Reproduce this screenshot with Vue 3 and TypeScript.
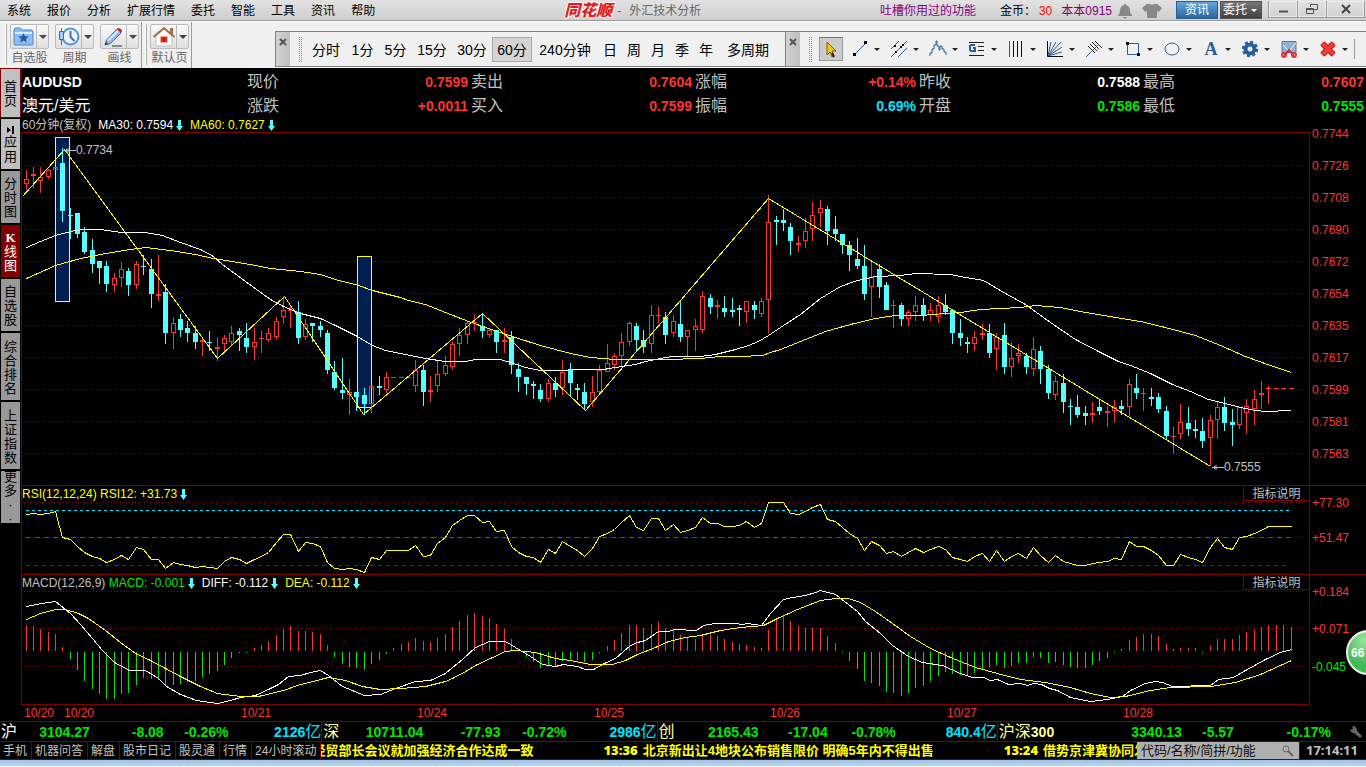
<script setup lang="ts">
interface Candle { x: number; up: boolean; hi: number; top: number; bot: number; lo: number }

const menus = ['系统', '报价', '分析', '扩展行情', '委托', '智能', '工具', '资讯', '帮助']
const periods = [
  { t: '分时', w: 'p2' }, { t: '1分', w: 'p1' }, { t: '5分', w: 'p1' }, { t: '15分', w: 'p2' }, { t: '30分', w: 'p2' },
  { t: '60分', w: 'p2', on: true }, { t: '240分钟', w: 'p4' }, { t: '日', w: 'p0' }, { t: '周', w: 'p0' }, { t: '月', w: 'p0' },
  { t: '季', w: 'p0' }, { t: '年', w: 'p0' }, { t: '多周期', w: 'p3' },
]
const drawTools = ['趋势线', '平行线', '波浪', '黄金分割', '周期线', '甘氏线', '通道', '矩形', '圆', '文字', '设置', '截图', '删除']
const quotes = [
  { a: '现价', av: '0.7599', ac: 'red', b: '涨跌', bv: '+0.0011', bc: 'red' },
  { a: '卖出', av: '0.7604', ac: 'red', b: '买入', bv: '0.7599', bc: 'red' },
  { a: '涨幅', av: '+0.14%', ac: 'red', b: '振幅', bv: '0.69%', bc: 'cyan' },
  { a: '昨收', av: '0.7588', ac: 'white', b: '开盘', bv: '0.7586', bc: 'green' },
  { a: '最高', av: '0.7607', ac: 'red', b: '最低', bv: '0.7555', bc: 'green' },
]
const sideTabs = [
  { t: '首页', k: 'home' }, { t: '应用', k: 'apps' }, { t: '分时图', k: 'three' }, { t: 'K线图', k: 'three on' },
  { t: '自选股', k: 'three' }, { t: '综合排名', k: 'four' }, { t: '上证指数', k: 'four' }, { t: '更多··', k: 'three' },
]
const indices = [
  { n: '沪', nc: 'white', v: ['3104.27', '-8.08', '-0.26%'], amt: '2126', w: 322, cols: [90, 74, 65, 93] },
  { n: '深', nc: 'pale', v: ['10711.04', '-77.93', '-0.72%'], amt: '2986', w: 335, cols: [101, 77, 66, 90] },
  { n: '创', nc: 'pale', v: ['2165.43', '-17.04', '-0.78%'], amt: '840.4', w: 340, cols: [101, 69, 68, 101] },
  { n: '沪深300', nc: 'pale', v: ['3340.13', '-5.57', '-0.17%'], amt: '', w: 369, cols: [184, 52, 97, 35] },
]
const footTabs = ['手机', '机器问答', '解盘', '股市日记', '股灵通', '行情', '24小时滚动']
const news = [
  { time: '', text: '经贸部长会议就加强经济合作达成一致' },
  { time: '13:36', text: '北京新出让4地块公布销售限价 明确5年内不得出售' },
  { time: '13:24', text: '借势京津冀协同发展' },
]

const barX = (i: number) => 26 + Math.floor(i * 7.355)

// high, body top, body bottom, low; r = rising, c = falling
const raw = `r170,179,184,190 r167,174,176,188 r167,177,181,193 r169,170,177,179 r167,167,170,170 c148,163,211,222 c208,215,216,239 c213,213,234,238 c227,232,252,254 c239,250,264,273
c261,261,268,284 c261,266,284,292 r273,278,285,292 r262,269,278,287 c268,271,285,296 r261,264,285,289 c255,266,267,275 c259,269,294,308 r255,294,296,301 c284,292,333,344
r317,323,333,349 c314,319,330,337 c321,328,333,342 c326,333,342,349 r338,340,342,356 c331,342,343,351 r337,347,349,361 r335,338,344,351 r326,333,342,345 c328,331,335,351
c323,338,347,353 r328,342,347,360 r331,338,339,353 r328,333,340,342 r317,321,337,340 r298,310,317,324 r305,310,311,328 c301,312,338,344 r319,324,337,340 c323,323,326,342
c321,326,330,337 c330,333,370,374 c361,372,388,390 c358,390,393,399 r379,392,395,415 c392,392,397,411 c388,395,404,415 r386,386,404,413 c376,386,388,395 r372,377,390,393
r377,377,378,378 r377,377,378,378 r377,377,378,378 r360,370,386,392 c365,370,392,406 r376,390,392,402 r361,374,386,392 r356,365,374,376 r342,344,367,370 r328,335,344,356
r322,323,335,344 r315,322,323,331 c314,326,331,338 r329,330,335,338 c330,330,342,353 r328,340,342,353 c331,337,365,374 c363,369,377,392 c377,377,384,395 c381,384,386,399
c384,390,399,402 r379,383,399,402 c377,383,390,397 r360,372,388,395 c363,370,383,396 c384,388,390,400 c383,392,404,410 r376,392,402,407 r365,370,392,394 r344,363,372,372
r353,356,365,370 r333,342,356,367 r321,323,342,346 c323,326,340,351 c330,340,347,353 r305,315,344,353 r307,315,316,323 c312,317,335,344 r315,321,333,337 c301,324,337,342
r330,330,337,357 r319,326,330,351 r291,296,330,333 c294,298,307,314 r300,305,307,319 c296,308,312,317 c298,310,312,317 c305,308,310,326 r301,301,312,323 c301,305,310,319
r298,301,314,317 r195,222,300,333 c216,220,222,245 c209,220,223,231 c223,227,241,255 r236,243,245,252 r218,231,241,248 r202,215,229,241 r200,208,213,227 c206,209,231,245
c216,229,234,241 c234,234,245,254 c241,245,255,271 c238,259,266,269 c245,266,294,300 r262,277,287,317 c264,269,287,298 c282,285,310,310 r300,305,306,328 c303,305,319,326
r310,312,319,326 r296,305,312,321 c298,305,315,321 r303,310,315,321 r296,305,317,323 c294,305,312,315 c310,310,333,344 c319,333,338,346 c337,342,344,353 r331,337,344,351
r324,333,335,340 c324,333,353,358 r333,337,349,370 c323,335,367,374 r342,358,367,377 r344,353,356,363 c353,356,367,374 r337,349,369,376 c346,351,369,384 c365,369,393,399
r376,381,395,400 c374,383,402,413 c399,406,407,425 c395,407,415,418 c406,413,416,425 r402,413,415,423 c399,407,411,415 r406,411,413,427 r400,407,411,422 c400,406,409,415
r379,384,407,416 c374,388,393,399 r388,393,394,411 c388,397,399,406 c393,397,409,413 c406,411,436,440 r427,436,437,454 r404,422,434,439 c407,423,429,436 c420,429,431,438
c418,431,441,448 r415,420,438,466 r402,407,420,439 c397,407,423,431 c409,422,425,446 r407,407,425,429 r399,406,413,434 r390,399,409,425 r381,393,395,409 r386,388,389,404
r388,388,389,389 r388,388,389,389 r388,388,389,389`
const candles: Candle[] = raw.split(/\s+/).map((s, i) => {
  const [hi, top, bot, lo] = s.slice(1).split(',').map(Number)
  return { x: barX(i), up: s[0] === 'r', hi, top, bot, lo }
})
const isHollow = (c: Candle) => c.up && c.bot - c.top > 2
const wick = (c: Candle) => `M${c.x + 0.5} ${c.hi}V${c.top}M${c.x + 0.5} ${c.bot}V${c.lo}`

const rsi = [514, 513, 514, 513, 511, 537, 539, 546, 552, 556, 558, 562, 559, 555, 559, 547, 549, 559, 559, 568, 562, 564, 565, 567, 566, 567, 568, 561, 557, 559,
  563, 559, 556, 552, 542, 534, 534, 551, 542, 543, 546, 562, 568, 569, 568, 569, 572, 557, 559, 550, 550, 550, 550, 545, 556, 555, 543, 537, 525, 520,
  515, 515, 522, 521, 531, 530, 546, 552, 556, 557, 562, 549, 553, 541, 546, 550, 556, 548, 536, 533, 529, 522, 515, 527, 530, 518, 518, 530, 524, 532,
  530, 527, 517, 523, 523, 526, 526, 525, 521, 527, 523, 502, 502, 502, 513, 514, 511, 507, 504, 519, 521, 527, 533, 538, 550, 541, 545, 553, 551, 556,
  552, 548, 552, 549, 546, 549, 557, 559, 561, 556, 553, 561, 550, 561, 556, 553, 558, 547, 555, 562, 555, 561, 563, 565, 565, 563, 562, 561, 558, 559,
  541, 546, 546, 550, 555, 565, 565, 554, 557, 559, 562, 547, 538, 547, 549, 537, 536, 533, 530, 526, 526, 526, 526]
const rsiLine = rsi.map((y, i) => `${barX(i)},${y}`).join(' ')

const hist = [26, 25, 22, 19, 17, 4, -7, -18, -29, -37, -42, -47, -47, -42, -41, -33, -26, -27, -28, -33, -33, -32, -30, -29, -25, -22, -19, -13, -6, -1,
  -1, 3, 6, 10, 16, 22, 25, 20, 20, 19, 17, 6, -5, -12, -15, -16, -18, -12, -8, -2, 3, 7, 9, 13, 10, 9, 13, 17, 24, 30,
  36, 38, 35, 33, 27, 22, 12, 1, -5, -10, -16, -13, -14, -9, -7, -8, -10, -8, -1, 5, 11, 18, 26, 26, 23, 27, 29, 23, 21, 16,
  13, 12, 17, 16, 15, 12, 9, 7, 6, 4, 3, 21, 31, 36, 30, 25, 23, 23, 23, 15, 8, -1, -9, -17, -29, -31, -34, -40, -41, -44,
  -41, -36, -34, -29, -24, -20, -22, -23, -24, -21, -17, -15, -13, -16, -14, -11, -11, -5, -6, -11, -10, -13, -15, -16, -16, -13, -9, -6, -1, 2,
  11, 14, 17, 17, 15, 7, 2, 3, 3, 3, -1, 5, 12, 12, 12, 16, 19, 21, 24, 26, 26, 26, 24]

const ma30 = '26,247 40,241 55,235 70,231 81,229 100,229 121,232 145,232 162,235 180,242 200,249 213,256 222,264 245,281 270,299 283,306 300,313 320,318 335,325 355,335 372,345 385,350 405,354 425,358 445,361 465,361 475,359 500,359 513,363 525,367 540,370 565,370 570,369 603,369 615,367 635,364 645,361 660,358 672,356 700,356 715,354 735,349 748,345 758,341 768,335 780,327 800,314 820,298 840,286 857,280 875,276 900,275 915,273 950,274 965,277 983,280 1005,293 1025,304 1050,322 1075,339 1100,352 1118,361 1130,365 1150,373 1172,384 1190,391 1208,399 1225,403 1240,407 1255,410 1265,411 1291,410'
const ma60 = '26,278 55,265 80,258 105,253 130,249 145,247 170,250 195,254 213,258 250,264 270,268 300,271 320,274 335,279 358,285 372,290 400,297 408,300 425,304 445,312 468,321 485,327 500,332 515,337 540,345 570,353 590,357 615,359 665,359 700,358 720,356 740,356 762,355 770,352 780,349 800,341 825,331 850,324 875,318 895,315 920,315 945,313 960,312 980,309 1000,308 1020,307 1035,305 1060,307 1085,312 1115,317 1140,321 1165,327 1195,335 1220,345 1245,356 1270,365 1291,372'
const zigzag = '22,196 64,149 217,358 284,296 363,414 482,313 585,410 768,198 1210,466'
const diff = '26,606 36,604 48,602 55,601 70,613 80,624 92,638 102,650 114,662 129,670 145,670 158,678 166,686 180,694 196,700 217,703 230,700 240,697 255,695 268,689 278,684 288,676 300,675 310,672 320,670 328,675 342,686 364,695 380,694 395,688 415,681 430,680 445,673 452,667 462,659 475,647 489,641 505,641 520,650 530,656 542,664 555,666 563,664 577,666 585,669 593,669 604,663 615,658 630,645 637,642 645,640 658,631 668,631 674,629 696,630 703,625 715,623 735,623 742,624 747,623 761,625 770,613 783,599 792,597 805,595 815,592 820,590 835,594 857,611 865,621 880,633 892,645 908,656 922,662 942,665 960,673 972,677 983,677 990,680 997,679 1008,684 1020,683 1027,685 1033,683 1041,684 1049,688 1057,690 1070,697 1090,701 1107,699 1122,696 1130,690 1145,683 1155,681 1162,682 1172,686 1210,685 1218,679 1233,677 1245,670 1265,659 1280,652 1291,649'
const dea = '26,619 40,613 55,609 65,609 78,613 88,618 105,630 120,642 135,653 150,660 165,668 180,676 200,686 217,693 240,696 258,696 283,690 297,685 320,679 328,677 345,680 362,686 380,689 400,688 425,686 445,681 452,678 467,670 475,665 490,658 505,651 515,650 535,652 555,658 570,660 590,664 612,664 625,660 637,654 655,647 668,641 685,637 700,635 720,630 740,627 763,625 777,618 797,609 820,600 835,598 848,598 860,602 875,611 892,623 910,636 930,648 950,657 975,667 997,673 1020,679 1045,682 1070,687 1090,693 1110,697 1125,696 1150,690 1170,687 1210,686 1235,682 1260,674 1280,665 1291,660'

const prices = ['0.7744', '0.7726', '0.7708', '0.7690', '0.7672', '0.7654', '0.7635', '0.7617', '0.7599', '0.7581', '0.7563']
const priceLabels = prices.map((t, i) => ({ t, top: `${((2 + i * 32) / 353) * 100}%` }))
const priceGrid = prices.slice(1).map((_, i) => 165 + i * 32)
const rsiLabels = [{ t: '+77.30', top: `${(17 / 88) * 100}%` }, { t: '+51.47', top: `${(52 / 88) * 100}%` }]
const macdLabels = [
  { t: '+0.184', top: `${(17 / 130) * 100}%`, c: 'red' },
  { t: '+0.071', top: `${(54 / 130) * 100}%`, c: 'red' },
  { t: '-0.045', top: `${(92 / 130) * 100}%`, c: 'green' },
]
const dates = [['10/20', 24], ['10/20', 64], ['10/21', 241], ['10/24', 417], ['10/25', 594], ['10/26', 770], ['10/27', 947], ['10/28', 1123]]
  .map(([t, x]) => ({ t, left: `${((Number(x) - 21) / 1345) * 100}%` }))
const marks = [{ t: '0.7734', x: 64, y: 150 }, { t: '0.7555', x: 1212, y: 467 }]
  .map(m => ({ t: m.t, left: `${((m.x - 22) / 1287) * 100}%`, top: `${((m.y - 133) / 352) * 100}%` }))
</script>

<template>
  <div class="app">
    <header class="titlebar">
      <nav class="menus"><button v-for="m in menus" :key="m">{{ m }}</button></nav>
      <div class="brand"><b class="logo">同花顺</b><span class="dash">-</span><span>外汇技术分析</span></div>
      <a class="purple feedback" href="#">吐槽你用过的功能</a>
      <span class="coins">金币：<em>30</em></span>
      <a class="purple user" href="#">本本0915</a>
      <button class="ico bell" aria-label="消息"><svg width="14" height="16" viewBox="0 0 14 16"><path fill="#888" d="M6 1h2v1c3 1 4 3 4 6 0 2 1 3 2 4v1H0v-1c1-1 2-2 2-4 0-3 1-5 4-6zM5 14h4l-2 2z" /></svg></button>
      <button class="ico shirt" aria-label="换肤"><svg width="20" height="16" viewBox="0 0 20 16"><path fill="#888" d="M5 1h3c1 1 3 1 4 0h3l5 4-3 4-2-1v7H5V8L3 9 0 5z" /></svg></button>
      <button class="pill blue">资讯</button>
      <button class="pill dark">委托<i class="tri w"></i></button>
      <div class="winctl">
        <button aria-label="最小化"><svg width="11" height="10"><path d="M1 7.500h9" stroke="#555" stroke-width="2" /></svg></button>
        <button aria-label="还原"><svg width="12" height="10" fill="none" stroke="#555"><path d="M4.500 3V.5h7v5H8M.5 4.500h7v5h-7zM1 5.500h6" /></svg></button>
        <button class="wide" aria-label="关闭"><svg width="10" height="10"><path d="M1 1l8 8M9 1L1 9" stroke="#444" stroke-width="2" /></svg></button>
      </div>
    </header>

    <section class="toolbar">
      <div class="group">
        <i class="grip"></i>
        <div class="tool">
          <div class="split"><button aria-label="自选股"><svg width="21" height="19" viewBox="0 0 21 19"><path d="M1 3q0-2 2-2h4l2 2h9q2 0 2 2v12q0 1-1 1H2q-1 0-1-1z" fill="#8dbdf2" stroke="#4a86c8" /><path d="M2 6h17" stroke="#d5e9ff" stroke-width="2" /><path d="M10.500 6l1.500 3.300 3.700.3-2.800 2.400.9 3.500-3.300-1.900-3.300 1.900.9-3.500-2.800-2.400 3.700-.3z" fill="#235a9c" /></svg></button><button class="dd" aria-label="自选股选项"><i class="tri"></i></button></div>
          <span>自选股</span>
        </div>
        <div class="tool">
          <div class="split"><button aria-label="周期"><svg width="22" height="20" viewBox="0 0 22 20"><circle cx="12.500" cy="9.500" r="8" fill="#eef6ff" stroke="#5592d2" stroke-width="2" /><path d="M12.500 4v6l4 4" fill="none" stroke="#4b6f9c" stroke-width="2" /><path d="M3.500 1v17" stroke="#2d6ebb" /><path d="M1.500 4.500h4v8h-4z" fill="#9bd1ff" stroke="#2d6ebb" /></svg></button><button class="dd" aria-label="周期选项"><i class="tri"></i></button></div>
          <span>周期</span>
        </div>
        <div class="tool">
          <div class="split"><button aria-label="画线"><svg width="20" height="20" viewBox="0 0 20 20"><path d="M8 19h10" stroke="#888" stroke-width="2" /><path d="M1 18l1.500-5L13 2l4 4L6.500 16.500z" fill="#8fbdec" stroke="#3c6da8" /><path d="M4 13.500L14 4" stroke="#d7ebff" stroke-width="2" /><path d="M13 2q1-2 4 0 2 2 0 4z" fill="#d22" /><path d="M1 18l1-3 2 2z" fill="#333" /></svg></button><button class="dd" aria-label="画线选项"><i class="tri"></i></button></div>
          <span>画线</span>
        </div>
      </div>
      <div class="group">
        <i class="grip"></i>
        <div class="tool">
          <div class="split"><button aria-label="默认页"><svg width="24" height="21" viewBox="0 0 24 21"><path d="M18 2h3v6h-3z" fill="#a56c4c" /><path d="M4 10l8-7 8 7v10H4z" fill="#fff" stroke="#bbb" /><path d="M1.500 11L12 2l10.500 9" fill="none" stroke="#a56c4c" stroke-width="2" /><path d="M8.500 10.500h7v6h-7z" fill="#e22e22" stroke="#fa9" /><path d="M12 11v5" stroke="#7a1010" /></svg></button><button class="dd" aria-label="默认页选项"><i class="tri"></i></button></div>
          <span>默认页</span>
        </div>
      </div>
      <div class="floating">
        <div class="bar periods">
          <button class="close" aria-label="关闭周期栏"><svg width="8" height="8"><path d="M1 1l6 6M7 1L1 7" stroke="#555" stroke-width="2" /></svg></button>
          <i class="dots"></i>
          <button v-for="p in periods" :key="p.t" class="period" :class="[p.w, { on: p.on }]">{{ p.t }}</button>
        </div>
        <div class="bar draws">
          <button class="close" aria-label="关闭画线栏"><svg width="8" height="8"><path d="M1 1l6 6M7 1L1 7" stroke="#555" stroke-width="2" /></svg></button>
          <i class="dots"></i>
          <button class="cursor" aria-label="选择"><svg width="12" height="17" viewBox="0 0 12 17"><path d="M2 1l9 9H7l2 5-2 1-2-5-3 3z" fill="#f3c51b" stroke="#7d5a08" /><path d="M7 12l2 4" stroke="#222" stroke-width="2" /></svg></button>
          <div v-for="(d, i) in drawTools" :key="d" class="draw">
            <button :aria-label="d">
              <svg width="18" height="18" viewBox="0 0 18 18" fill="none" stroke="#2b5c9c">
                <template v-if="i === 0"><path d="M4 14L15 3" /><path d="M2 13h3v3H2zM13 1h3v3h-3z" fill="#000" stroke="none" /></template>
                <template v-else-if="i === 1"><path d="M1 9L9 1M1 17L17 1M8 17l9-9" /><path d="M4 5h2v2H4zM5 11h2v2H5zM10 6h2v2h-2zM12 4h2v2h-2z" fill="#111" stroke="none" /></template>
                <template v-else-if="i === 2"><path d="M1 16v-3h2V9h2V5h2V1h1v5h2v4h1V6h2v3h2v3h2v3" /></template>
                <template v-else-if="i === 3"><path d="M1 2.500h15M10 6.500h6M10 10.500h6M1 15.500h15" stroke="#222" /><path d="M7 5H3L2 6v4l1 1h4V8H5" stroke-width="2" /></template>
                <template v-else-if="i === 4"><path d="M2.500 1v16" /><path d="M6.500 1v16M10.500 1v16M14.500 1v16" stroke="#111" /></template>
                <template v-else-if="i === 5"><path d="M2 16L5 2M2 16L10 2M2 16L15 2M2 16l14-9M2 16l14-4" /><path d="M1.500 1v15.500H17" stroke="#111" /></template>
                <template v-else-if="i === 6"><path d="M1 17L14 4" /><path d="M3 6l7 7M5 4l7 7M7 2l7 7M10 1l7 7" stroke="#222" /></template>
                <template v-else-if="i === 7"><path d="M3.500 3.500h11v11h-11z" /><path d="M2 2h3v3H2zM13 13h3v3h-3z" fill="#000" stroke="none" /></template>
                <template v-else-if="i === 8"><ellipse cx="9" cy="9" rx="7" ry="6" /></template>
                <text v-else-if="i === 9" x="9" y="15" class="glyph">A</text>
                <template v-else-if="i === 10"><circle cx="9" cy="9" r="4.500" stroke-width="4" /><circle cx="9" cy="9" r="7" stroke-width="2.500" stroke-dasharray="3 2.500" /></template>
                <template v-else-if="i === 11"><path d="M2 1.500h14v11H2z" fill="#8fb2d6" stroke="#5a7896" /><path d="M3 5l6 6 7-8" stroke="#e9f3ff" /><path d="M4 16l5-6 5 6" stroke="#d8262a" stroke-width="2" /><circle cx="4" cy="15" r="2" stroke="#e0353a" stroke-width="2" /><circle cx="14" cy="15" r="2" stroke="#e0353a" stroke-width="2" /></template>
                <template v-else><path d="M3.500 3.500l11 11M14.500 3.500l-11 11" stroke="#a81212" stroke-width="6" /><path d="M3 3l12 12M15 3L3 15" stroke="#f03c35" stroke-width="4" /></template>
              </svg>
            </button>
            <button class="more" :aria-label="d + '选项'"><i class="tri k"></i></button>
          </div>
          <i class="endline"></i>
        </div>
      </div>
    </section>

    <main class="work">
      <nav class="side">
        <button v-for="s in sideTabs" :key="s.t" :class="s.k">
          <svg v-if="s.t === '应用'" width="9" height="8"><path d="M1 1l4 3-4 3zM6 0h2v8H6z" /></svg>
          <span v-for="(ch, i) in s.t" :key="i">{{ ch }}</span>
        </button>
      </nav>
      <div class="content">
        <section class="quote">
          <div class="name"><b>AUDUSD</b><span>澳元/美元</span></div>
          <div v-for="q in quotes" :key="q.a" class="pair">
            <div><span>{{ q.a }}</span><b :class="q.ac">{{ q.av }}</b></div>
            <div><span>{{ q.b }}</span><b :class="q.bc">{{ q.bv }}</b></div>
          </div>
        </section>
        <div class="legend top">
          <span class="grey">60分钟(复权)</span>
          <span class="white">MA30: 0.7594<svg class="down" viewBox="0 0 7 11"><path d="M2 0h3v6h2L3.500 11 0 6h2z" /></svg></span>
          <span class="yellow">MA60: 0.7627<svg class="down" viewBox="0 0 7 11"><path d="M2 0h3v6h2L3.500 11 0 6h2z" /></svg></span>
        </div>

        <section class="panel price">
          <div class="plot">
            <svg class="chart" viewBox="22 133 1287 352" preserveAspectRatio="none">
              <path v-for="y in priceGrid" :key="y" class="grid" :d="`M24 ${y + 0.5}H1305`" />
              <rect class="mark" x="55.500" y="137.500" width="14" height="164" />
              <rect class="mark" x="357.500" y="256.500" width="14" height="151" />
              <g v-for="c in candles" :key="c.x" :class="c.up ? 'rise' : 'fall'">
                <path :d="wick(c)" />
                <rect v-if="isHollow(c)" :x="c.x - 1.5" :y="c.top + 0.5" width="4" :height="c.bot - c.top - 1" />
                <rect v-else class="solid" :x="c.x - 2" :y="c.top" width="5" :height="c.bot - c.top" />
              </g>
              <g transform="translate(.5 .5)">
                <polyline class="white-s" :points="ma30" />
                <polyline class="yellow-s" :points="ma60" />
                <polyline class="yellow-s" :points="zigzag" />
              </g>
            </svg>
            <span v-for="m in marks" :key="m.t" class="tag" :style="{ left: m.left, top: m.top }"><svg width="12" height="7"><path d="M0 3.500h12M4 1v5M2.500 2v3" stroke="#c0c0c0" fill="none" /></svg>{{ m.t }}</span>
          </div>
          <div class="axis"><span v-for="l in priceLabels" :key="l.t" class="red" :style="{ top: l.top }">{{ l.t }}</span></div>
        </section>

        <section class="panel rsi">
          <div class="plot">
            <svg class="chart" viewBox="22 486 1287 88" preserveAspectRatio="none">
              <path class="grid" d="M24 502.500H1305M24 537.500H1305M24 573.500H1305" />
              <path class="dash-c" d="M26 510.500H1290" />
              <path class="dash-g" d="M26 537.500H1290" />
              <path class="dash-r" d="M26 565.500H1290" />
              <g transform="translate(.5 .5)"><polyline class="yellow-s" :points="rsiLine" /></g>
            </svg>
            <div class="legend over yellow"><span>RSI(12,12,24) RSI12: +31.73<svg class="down" viewBox="0 0 7 11"><path d="M2 0h3v6h2L3.500 11 0 6h2z" /></svg></span></div>
            <button class="explain">指标说明</button>
          </div>
          <div class="axis"><span v-for="l in rsiLabels" :key="l.t" class="red" :style="{ top: l.top }">{{ l.t }}</span></div>
        </section>

        <section class="panel macd">
          <div class="plot">
            <svg class="chart" viewBox="22 575 1287 129" preserveAspectRatio="none">
              <path class="grid" d="M24 591.500H1305M24 628.500H1305M24 666.500H1305" />
              <rect v-for="(h, i) in hist" :key="i" :x="barX(i)" :y="h > 0 ? 651 - h : 652" width="1" :height="Math.abs(h)" :fill="h > 0 ? '#ff3232' : '#00e600'" />
              <g transform="translate(.5 .5)">
                <polyline class="white-s" :points="diff" />
                <polyline class="yellow-s" :points="dea" />
              </g>
            </svg>
            <div class="legend over">
              <span class="grey">MACD(12,26,9) <span class="green">MACD: -0.001</span><svg class="down" viewBox="0 0 7 11"><path d="M2 0h3v6h2L3.500 11 0 6h2z" /></svg></span>
              <span class="white">DIFF: -0.112<svg class="down" viewBox="0 0 7 11"><path d="M2 0h3v6h2L3.500 11 0 6h2z" /></svg></span>
              <span class="yellow">DEA: -0.112<svg class="down" viewBox="0 0 7 11"><path d="M2 0h3v6h2L3.500 11 0 6h2z" /></svg></span>
            </div>
            <button class="explain">指标说明</button>
          </div>
          <div class="axis"><span v-for="l in macdLabels" :key="l.t" :class="l.c" :style="{ top: l.top }">{{ l.t }}</span></div>
        </section>
        <div class="dates"><span v-for="d in dates" :key="d.left" :style="{ left: d.left }">{{ d.t }}</span></div>
      </div>
    </main>

    <section class="indices">
      <div v-for="x in indices" :key="x.n" class="index" :style="{ flexGrow: x.w, gridTemplateColumns: x.cols.map(c => c + 'fr').join(' ') }">
        <div class="first"><span :class="x.nc">{{ x.n.replace('300', '') }}<b v-if="x.n.includes('300')">300</b></span><b>{{ x.v[0] }}</b></div>
        <b>{{ x.v[1] }}</b>
        <b>{{ x.v[2] }}</b>
        <span v-if="x.amt" class="cyan amt"><b>{{ x.amt }}</b>亿</span>
        <button v-else class="wrench" aria-label="设置"><svg width="14" height="13" viewBox="0 0 14 13"><path d="M1 1l3 2-1 2-2-1q0 4 4 4l6 5 2-2-5-5q0-5-5-5l1 2z" fill="#666" /></svg></button>
      </div>
    </section>

    <footer class="foot">
      <button v-for="f in footTabs" :key="f" class="ftab">{{ f }}</button>
      <div class="ticker"><div class="track"><a v-for="n in news" :key="n.text" href="#"><b v-if="n.time">{{ n.time }}</b>{{ n.text }}</a></div></div>
      <label class="search"><input aria-label="搜索" placeholder="代码/名称/简拼/功能" /><svg width="12" height="12" fill="none" stroke="#666"><circle cx="4" cy="4" r="3" /><path d="M6 6l5 5" stroke-width="2" /></svg></label>
      <time>17:14:11</time>
    </footer>
    <div class="strip"></div>
    <button class="ball">66</button>
  </div>
</template>

<style>
html, body { background: #000; overflow: hidden; }
</style>

<style scoped>
.app { position: relative; display: flex; flex-direction: column; height: 100vh; background: #000; font: 12px/16px "Liberation Sans", "Noto Sans CJK SC", sans-serif; overflow: hidden; color: #000; white-space: nowrap; }
button { font: inherit; color: inherit; border: 0; padding: 0; margin: 0; background: none; cursor: pointer; white-space: nowrap; }
a { text-decoration: none; color: inherit; }
svg { display: block; flex: none; }
.red { color: #ff3232; } .green { color: #00e600; } .cyan { color: #00e5ff; } .white { color: #fff; } .yellow { color: #ff0; } .grey { color: #c0c0c0; } .pale { color: #ffff9c; }

.titlebar { display: flex; height: 20px; box-sizing: border-box; flex: 0 0 21px; align-items: center; background: linear-gradient(#e2e2e2, #cfcfcf); border-bottom: 1px solid #999; padding: 1px 1px 0 7px; }
.menus { display: flex; gap: 16px; }
.brand { display: flex; align-items: center; margin: 0 auto 0 189px; color: #666; }
.logo { font-size: 16px; line-height: 18px; font-style: italic; font-weight: 900; color: #df2020; text-shadow: 1px 0 #fff, -1px 0 #fff, 0 1px #fff, 0 -1px #fff; }
.dash { margin: 0 8px 0 5px; }
.purple { color: #800080; }
.coins { margin: 0 9px 0 24px; }
.coins em { color: #f00; font-style: normal; margin-left: 3px; }
.ico.bell { margin: 0 10px 0 6px; }
.ico.shirt { margin-right: 14px; }
.pill { height: 18px; width: 42px; color: #fff; border: 1px solid #555; margin-right: 2px; align-self: flex-start; line-height: 16px; }
.pill.blue { background: linear-gradient(#62a6dd, #2b669c); border-color: #2b5f90; }
.pill.dark { background: linear-gradient(#777, #404040); display: flex; align-items: center; justify-content: space-between; padding: 0 4px 0 2px; }
.tri { display: block; border: 4px solid transparent; border-top-color: #444; border-bottom: 0; }
.tri.w { border-width: 3px; border-bottom: 0; border-top-color: #fff; }
.tri.k { border-width: 3px; border-bottom: 0; border-top-color: #222; }
.winctl { display: flex; align-self: flex-start; margin-left: 4px; border: 1px solid #999; border-top: 0; }
.winctl button { width: 29px; height: 16px; display: flex; align-items: center; justify-content: center; border-right: 1px solid #999; box-shadow: inset 0 0 0 1px #ececec; }
.winctl .wide { width: 37px; border-right: 0; }

.toolbar { display: flex; flex: none; height: 46px; background: #f0f0f0; border-top: 1px solid #fff; }
.group { display: flex; align-items: flex-start; border-right: 1px solid #999; padding: 2px 2px 0 5px; }
.group + .group { padding-left: 3px; }
.grip { width: 1px; height: 41px; border-right: 1px solid #aaa; background: #fff; margin-right: 3px; }
.tool { display: flex; flex-direction: column; align-items: center; color: #666; margin-right: 6px; line-height: 19px; }
.tool:last-child { margin-right: 0; }
.split { display: flex; border: 1px solid #bbb; border-radius: 2px; background: linear-gradient(#fafafa, #e0e0e0); height: 25px; width: 39px; box-sizing: border-box; }
.split button { flex: 1; display: flex; align-items: center; justify-content: center; }
.split .dd { flex: 0 0 12px; border-left: 1px solid #bbb; }
.floating { display: flex; flex: 1; min-width: 0; margin: 9px 0 0 83px; height: 34px; border: 1px solid #808080; border-right: 0; box-shadow: 0 1px #fff; }
.bar { display: flex; align-items: center; }
.bar.periods { padding-right: 7px; }
.bar.draws { border-left: 1px solid #808080; flex: 1; }
.close { align-self: stretch; width: 14px; background: linear-gradient(90deg, #d2d2d2, #c0c0c0); display: flex; justify-content: center; padding-top: 6px; }
.dots { width: 1px; height: 25px; margin: 0 4px 0 9px; border-left: 1px dotted #888; border-right: 1px dotted #888; }
.period { font-size: 14px; height: 25px; line-height: 24px; box-sizing: border-box; border: 1px solid transparent; text-align: center; }
.period.on { background: #d4d4d4; border-color: #aaa; }
.p0 { width: 24px; } .p1 { width: 33px; } .p2 { width: 40px; } .p3 { width: 60px; } .p4 { width: 66px; }
.cursor { width: 24px; height: 24px; border: 1px solid #999; border-top-color: #777; background: #ccc; display: flex; align-items: center; justify-content: center; margin: 0 8px 0 3px; box-sizing: border-box; }
.draw { display: flex; align-items: center; width: 39px; gap: 5px; }
.glyph { font: bold 18px "Liberation Serif", serif; fill: #2b5c9c; stroke: none; text-anchor: middle; }
.more { padding: 8px 0; }
.endline { width: 1px; height: 20px; background: #999; margin-left: -4px; }

.work { display: flex; flex: 1; min-height: 0; }
.side { width: 21px; flex: none; display: flex; flex-direction: column; gap: 2px; }
.side button { width: 19px; margin-left: 1px; height: 52px; flex: none; background: #999; display: flex; flex-direction: column; align-items: center; justify-content: center; font-size: 13px; line-height: 14px; padding-top: 2px; box-sizing: border-box; }
.side .four { height: 67px; }
.side .home { width: 21px; margin: 0; height: 50px; border: 1px solid #800000; background: #c0c0c0; margin-bottom: -1px; }
.side .apps { height: 50px; background: #c0c0c0; gap: 1px; }
.side .on { background: #800000; color: #fff; }
.side .on span:first-child { font-family: "Liberation Serif", serif; font-weight: bold; }
.content { flex: 1; min-width: 0; display: flex; flex-direction: column; }
.quote { display: grid; grid-template-columns: repeat(6, 1fr); flex: none; padding-left: 1px; font-size: 16px; line-height: 24px; padding-top: 2px; }
.quote b { font-size: 14px; }
.name { display: flex; flex-direction: column; color: #fff; height: 48px; }
.name > * { height: 24px; }
.pair { color: #c0c0c0; padding: 0 2px 0 1px; }
.pair > div { display: flex; justify-content: space-between; height: 24px; }
.legend { display: flex; gap: 7px; }
.legend > span { display: flex; align-items: center; white-space: pre; }
.legend.top { padding-left: 1px; height: 14px; line-height: 14px; flex: none; }
.legend.over { position: absolute; left: 0; top: 0; height: 16px; line-height: 16px; }
.down { width: 7px; height: 11px; margin-left: 3px; fill: #54ffff; }
.panel { display: flex; min-height: 0; }
.price { flex: 353 1 0; }
.rsi { flex: 88 1 0; border-top: 1px solid #800000; }
.macd { flex: 130 1 0; border-top: 1px solid #800000; }
.plot { position: relative; flex: 1; min-width: 0; border-left: 1px solid #800000; border-right: 1px solid #800000; }
.price .plot { border-top: 1px solid #800000; }
.macd .plot { border-bottom: 1px solid #800000; }
.chart { position: absolute; inset: 0; width: 100%; height: 100%; shape-rendering: crispEdges; fill: none; }
.grid { stroke: #900000; stroke-dasharray: 1 2; }
.mark { fill: #001f50; stroke: #ff0; }
.rise { stroke: #ff3232; } .fall { stroke: #54ffff; }
.solid { stroke: none; }
.rise .solid { fill: #ff3232; } .fall .solid { fill: #54ffff; }
.white-s { stroke: #fff; } .yellow-s { stroke: #ff0; }
.dash-c { stroke: #00e5ff; stroke-dasharray: 3 3; } .dash-g { stroke: #00804a; stroke-dasharray: 5 4; } .dash-r { stroke: #c00000; stroke-dasharray: 4 4; }
.tag { position: absolute; display: flex; align-items: center; color: #c0c0c0; transform: translateY(-50%); }
.axis { position: relative; width: 56px; flex: none; }
.axis span { position: absolute; left: 2px; transform: translateY(-50%); }
.explain { position: absolute; right: 0; top: 0; width: 66px; height: 15px; line-height: 15px; box-sizing: border-box; border-left: 1px solid #800000; border-bottom: 1px solid #800000; color: #c0c0c0; background: #000; padding-top: 1px; }
.dates { position: relative; height: 16px; flex: none; color: #ff3232; }
.dates span { position: absolute; }

.indices { display: flex; flex: none; height: 19px; border-top: 1px solid #800000; color: #00e600; font-size: 14px; line-height: 20px; }
.index { flex: 1 1 0; display: grid; box-sizing: border-box; border-right: 1px solid #800000; text-align: right; min-width: 0; }
.index:last-child { border-right: 0; }
.index > * { height: 19px; min-width: 0; }
.first { display: flex; justify-content: space-between; padding-left: 1px; }
.first span, .amt { font-size: 16px; }
.index b { font-size: 14px; }
.amt { display: flex; justify-content: flex-end; }
.wrench { display: flex; align-items: center; justify-content: flex-end; padding-right: 3px; }
.foot { display: flex; flex: none; height: 17px; border-top: 1px solid #800000; border-bottom: 1px solid #800000; color: #c0c0c0; line-height: 17px; }
.ftab { border-right: 1px solid #800000; padding: 0 4px 0 3px; line-height: 16px; }
.ticker { flex: 1; min-width: 0; overflow: hidden; color: #ff0; font-size: 13px; font-weight: bold; }
.track { display: flex; gap: 70px; margin-left: -9px; }
.track a { flex: none; }
.track b { font-family: "Noto Sans", sans-serif; font-size: 13px; margin-right: 5px; }
.search { display: flex; align-items: center; width: 162px; box-sizing: border-box; background: #b0b0b0; padding: 0 5px 0 4px; }
.search input { flex: 1; min-width: 0; border: 0; padding: 0; background: none; font: 13px/16px "Liberation Sans", "Noto Sans CJK SC", sans-serif; height: 16px; outline: 0; }
.search input::placeholder { color: #111; opacity: 1; }
.foot time { width: 67px; box-sizing: border-box; border-left: 1px solid #800000; padding-left: 6px; font: bold 13px/17px "Noto Sans", sans-serif; }
.strip { height: 7px; flex: none; background: linear-gradient(#9dc0e4, #b9d4f0 80%, #eef6ff 81%); }
.ball { position: absolute; right: -25px; bottom: 92px; width: 45px; height: 45px; box-sizing: border-box; border: 2px solid #eee; border-radius: 50%; background: radial-gradient(circle at 40% 20%, #9be39b, #3cba54 60%); color: #fff; font: bold 12px/40px "Liberation Sans", sans-serif; text-align: left; padding-left: 3px; }
</style>
